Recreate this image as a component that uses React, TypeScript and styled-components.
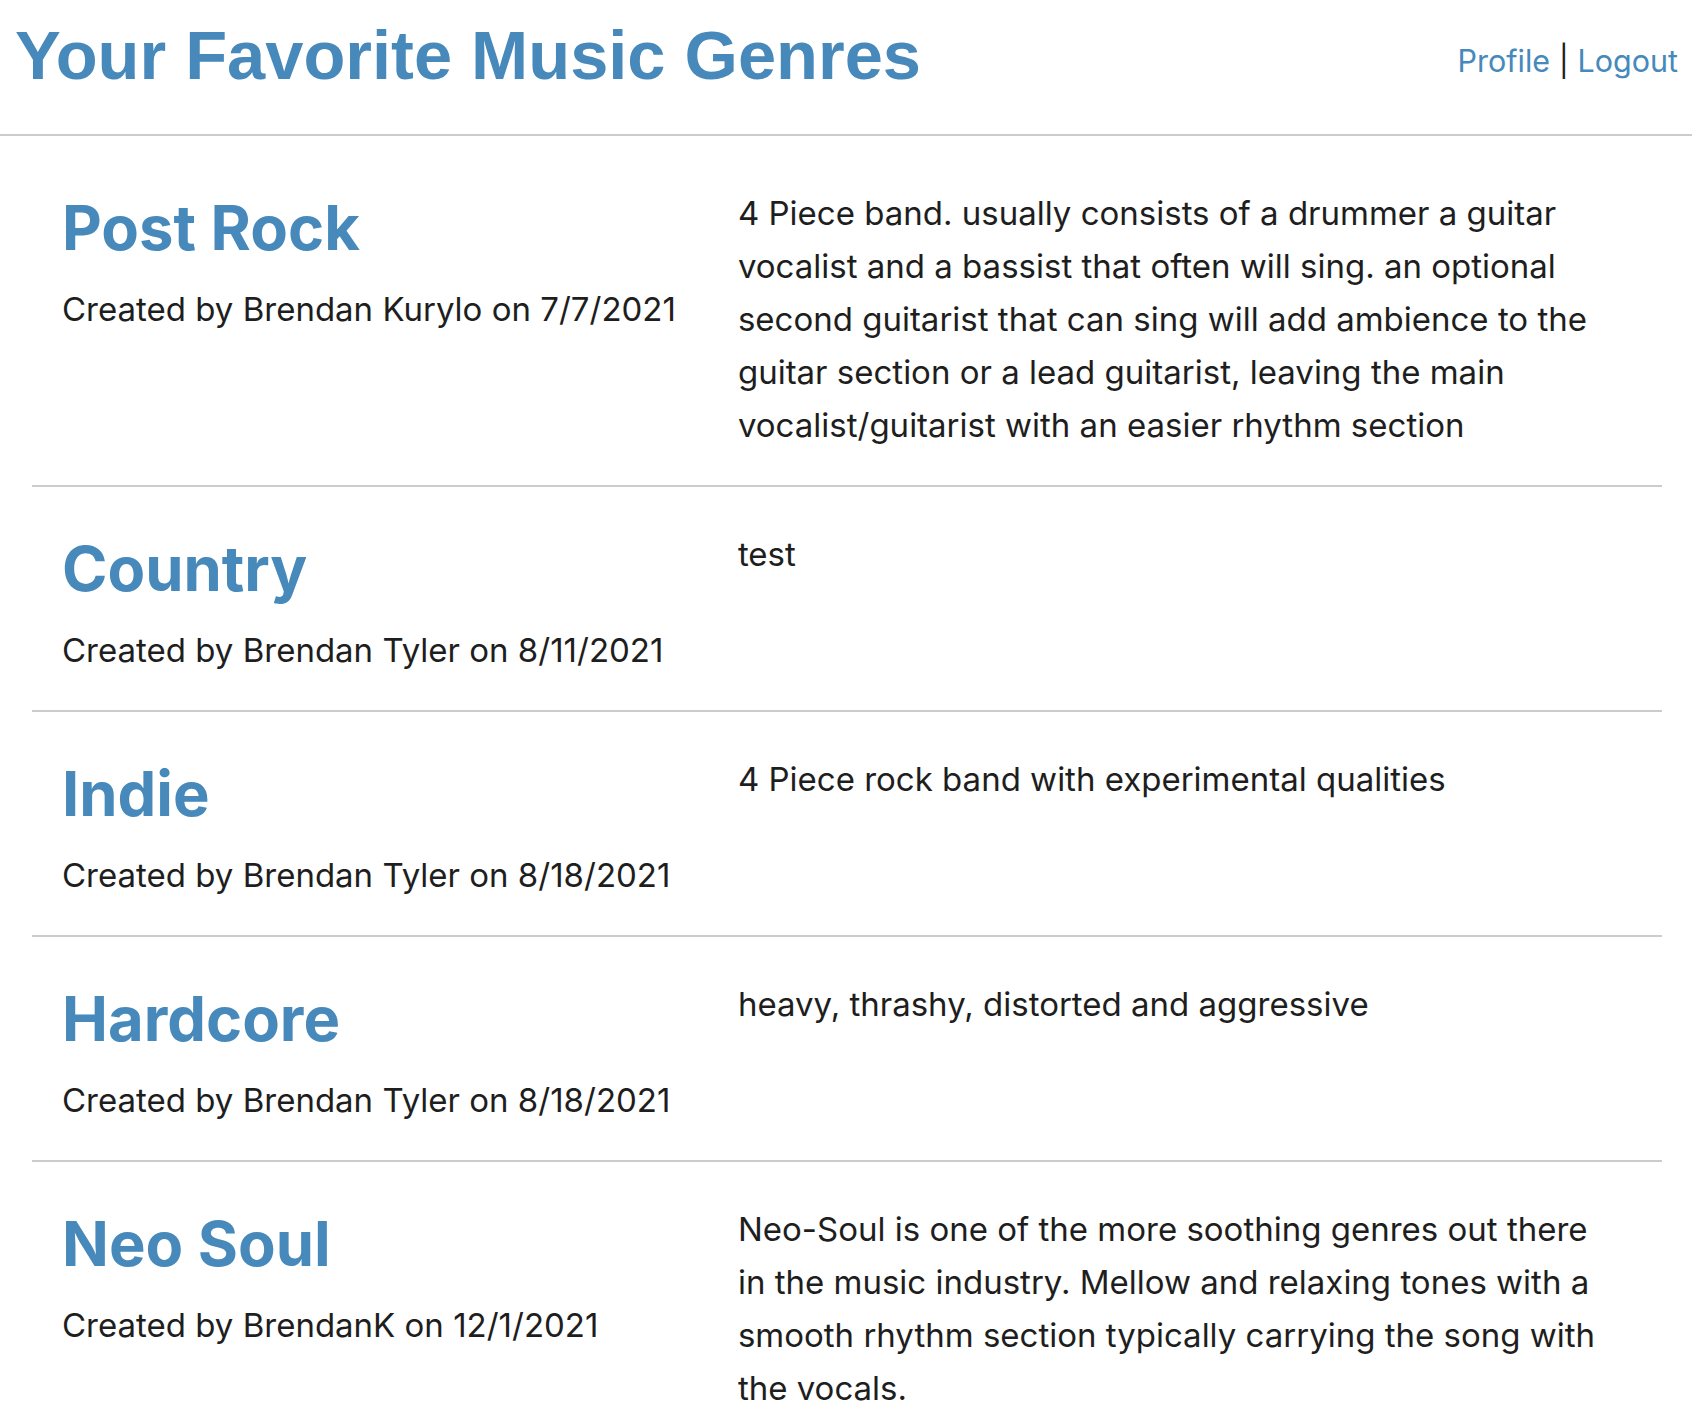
import React from 'react';
import styled, { createGlobalStyle } from 'styled-components';

const GlobalStyle = createGlobalStyle`
  html, body {
    margin: 0;
    padding: 0;
    background: #ffffff;
  }
  body {
    font-family: Inter, 'Noto Sans', 'Liberation Sans', sans-serif;
    color: #1e1e1e;
  }
`;

const BLUE = '#4689ba';

const Header = styled.header`
  display: flex;
  justify-content: space-between;
  align-items: flex-start;
  box-sizing: border-box;
  height: 136px;
  padding: 16px 14px 0 15px;
  border-bottom: 2px solid #cccccc;
`;

const Title = styled.h1`
  margin: 0;
  font-family: 'Liberation Sans', Arial, sans-serif;
  font-size: 68.6px;
  line-height: 80px;
  font-weight: 700;
  color: ${BLUE};
`;

const Nav = styled.nav`
  margin-top: 25px;
  font-size: 30.5px;
  line-height: 40px;
  color: #1e1e1e;

  a {
    color: ${BLUE};
    text-decoration: none;
  }
`;

const List = styled.table`
  width: calc(100% - 62px);
  margin: 10px 30px 0 32px;
  border-collapse: collapse;
`;

const Row = styled.tr`
  border-bottom: 2px solid #cccccc;
  &:last-child {
    border-bottom: 0;
  }
`;

interface CellProps {
  $padRight?: number;
}
const Cell = styled.td<CellProps>`
  padding: 0 ${props => props.$padRight ?? 32}px 0 30px;
  vertical-align: top;
`;

const Name = styled.h2`
  margin: 46px 0 0;
  font-size: 61.5px;
  line-height: 72px;
  font-weight: 700;
  color: ${BLUE};
  white-space: nowrap;
`;

const Meta = styled.p`
  margin: 19px 0 33px;
  font-size: 33px;
  line-height: 53px;
  white-space: nowrap;
`;

const Description = styled.p`
  margin: 41px 0 33px;
  font-size: 33px;
  line-height: 53px;
`;

interface Genre {
  name: string;
  author: string;
  date: string;
  description: string;
}

const genres: Genre[] = [
  {
    name: 'Post Rock',
    author: 'Brendan Kurylo',
    date: '7/7/2021',
    description:
      '4 Piece band. usually consists of a drummer a guitar vocalist and a bassist that often will sing. an optional second guitarist that can sing will add ambience to the guitar section or a lead guitarist, leaving the main vocalist/guitarist with an easier rhythm section',
  },
  { name: 'Country', author: 'Brendan Tyler', date: '8/11/2021', description: 'test' },
  {
    name: 'Indie',
    author: 'Brendan Tyler',
    date: '8/18/2021',
    description: '4 Piece rock band with experimental qualities',
  },
  {
    name: 'Hardcore',
    author: 'Brendan Tyler',
    date: '8/18/2021',
    description: 'heavy, thrashy, distorted and aggressive',
  },
  {
    name: 'Neo Soul',
    author: 'BrendanK',
    date: '12/1/2021',
    description:
      'Neo-Soul is one of the more soothing genres out there in the music industry. Mellow and relaxing tones with a smooth rhythm section typically carrying the song with the vocals.',
  },
];

const App = () => {
  return (
    <>
      <GlobalStyle />
      <Header>
        <Title>Your Favorite Music Genres</Title>
        <Nav>
          <a href="#profile">Profile</a> | <a href="#logout">Logout</a>
        </Nav>
      </Header>
      <List>
        <tbody>
          {genres.map(g => (
            <Row key={g.name}>
              <Cell>
                <Name>{g.name}</Name>
                <Meta>
                  Created by {g.author} on {g.date}
                </Meta>
              </Cell>
              <Cell $padRight={52}>
                <Description>{g.description}</Description>
              </Cell>
            </Row>
          ))}
        </tbody>
      </List>
    </>
  );
};

export default App;
